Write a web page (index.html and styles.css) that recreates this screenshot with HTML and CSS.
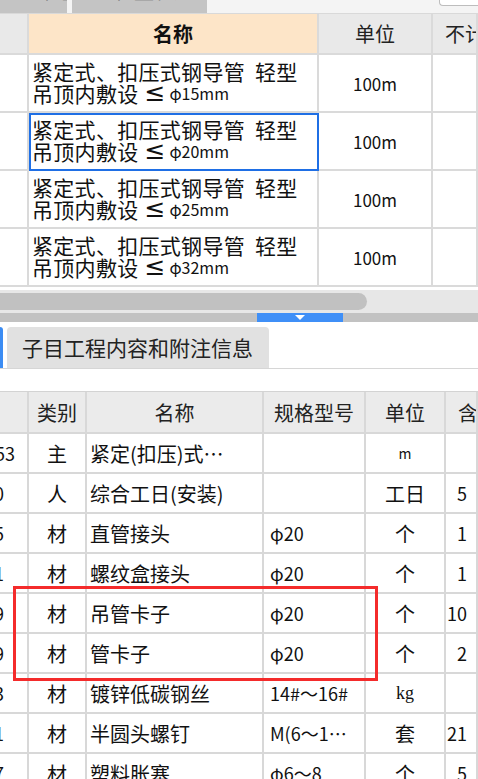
FILE: index.html
```html
<!DOCTYPE html>
<html lang="zh-CN">
<head>
<meta charset="utf-8">
<title>子目工程内容</title>
<link rel="stylesheet" href="styles.css">
</head>
<body>
<div class="page">
  <div class="strip">
    <div class="stab stab-1"><span>工程量</span></div>
    <div class="stab stab-2"><span>工程量表达式</span></div>
    <div class="strip-box"></div>
  </div>

  <div class="t1">
    <div class="c h"></div>
    <div class="c h hname">名称</div>
    <div class="c h">单位</div>
    <div class="c h hcut">不计价</div>

    <div class="c"></div>
    <div class="c ncell"><div class="ln">紧定式、扣压式钢导管&nbsp;&nbsp;轻型</div><div class="ln">吊顶内敷设 <span class="le">≤</span><span class="sz">φ15mm</span></div></div>
    <div class="c ucell">100m</div>
    <div class="c"></div>

    <div class="c"></div>
    <div class="c ncell sel"><div class="ln">紧定式、扣压式钢导管&nbsp;&nbsp;轻型</div><div class="ln">吊顶内敷设 <span class="le">≤</span><span class="sz">φ20mm</span></div></div>
    <div class="c ucell">100m</div>
    <div class="c"></div>

    <div class="c"></div>
    <div class="c ncell"><div class="ln">紧定式、扣压式钢导管&nbsp;&nbsp;轻型</div><div class="ln">吊顶内敷设 <span class="le">≤</span><span class="sz">φ25mm</span></div></div>
    <div class="c ucell">100m</div>
    <div class="c"></div>

    <div class="c"></div>
    <div class="c ncell"><div class="ln">紧定式、扣压式钢导管&nbsp;&nbsp;轻型</div><div class="ln">吊顶内敷设 <span class="le">≤</span><span class="sz">φ32mm</span></div></div>
    <div class="c ucell">100m</div>
    <div class="c"></div>
  </div>

  <div class="gap1"></div>
  <div class="hscroll"><div class="thumb"></div></div>
  <div class="splitter"><div class="grip"></div></div>

  <div class="tabs">
    <div class="tab-edge"></div>
    <div class="tab">子目工程内容和附注信息</div>
  </div>
  <div class="gap2"></div>

  <div class="t2wrap">
    <div class="t2">
      <div class="d hd"></div>
      <div class="d hd">类别</div>
      <div class="d hd">名称</div>
      <div class="d hd">规格型号</div>
      <div class="d hd">单位</div>
      <div class="d hd hqty">含量</div>

      <div class="d idx wide">0.053</div><div class="d mid">主</div><div class="d nm">紧定(扣压)式…</div><div class="d sp"></div><div class="d mid small">m</div><div class="d qty"></div>
      <div class="d idx">0.0</div><div class="d mid">人</div><div class="d nm">综合工日(安装)</div><div class="d sp"></div><div class="d mid">工日</div><div class="d qty">5</div>
      <div class="d idx">2.5</div><div class="d mid">材</div><div class="d nm">直管接头</div><div class="d sp">φ20</div><div class="d mid">个</div><div class="d qty">1</div>
      <div class="d idx">2.1</div><div class="d mid">材</div><div class="d nm">螺纹盒接头</div><div class="d sp">φ20</div><div class="d mid">个</div><div class="d qty">1</div>
      <div class="d idx">1.9</div><div class="d mid">材</div><div class="d nm">吊管卡子</div><div class="d sp">φ20</div><div class="d mid">个</div><div class="d qty">10</div>
      <div class="d idx">1.9</div><div class="d mid">材</div><div class="d nm">管卡子</div><div class="d sp">φ20</div><div class="d mid">个</div><div class="d qty">2</div>
      <div class="d idx">0.3</div><div class="d mid">材</div><div class="d nm">镀锌低碳钢丝</div><div class="d sp">14#～16#</div><div class="d mid kg">kg</div><div class="d qty"></div>
      <div class="d idx">4.1</div><div class="d mid">材</div><div class="d nm">半圆头螺钉</div><div class="d sp">M(6～1…</div><div class="d mid">套</div><div class="d qty">21</div>
      <div class="d idx">2.7</div><div class="d mid">材</div><div class="d nm">塑料胀塞</div><div class="d sp">φ6～8</div><div class="d mid">个</div><div class="d qty">5</div>
    </div>
    <div class="redbox"></div>
  </div>
</div>
</body>
</html>
```
FILE: styles.css
```css
html, body {
  margin: 0;
  padding: 0;
}
body {
  width: 478px;
  height: 779px;
  overflow: hidden;
  background: #ffffff;
  font-family: "Noto Sans CJK SC", "Noto Sans", sans-serif;
  color: #111111;
}
.page {
  width: 478px;
}

/* top strip */
.strip {
  display: flex;
  height: 14px;
  box-sizing: border-box;
  background: #f4f4f4;
  border-bottom: 1px solid #d9d9d9;
  overflow: hidden;
}
.stab {
  height: 13px;
  background: #c4c4c4;
  overflow: hidden;
  font-size: 20px;
  color: #555;
}
.stab-1 { width: 67px; }
.stab-2 { width: 135px; margin-left: 5px; }
.stab span {
  display: block;
  line-height: 20px;
  margin-top: -19px;
  padding-left: 22px;
  white-space: nowrap;
}
.strip-box {
  margin-left: auto;
  width: 38px;
  height: 5px;
  background: #fff;
  border: 1px solid #bdbdbd;
  border-top: none;
  border-right: none;
  border-radius: 0 0 0 4px;
}

/* top table */
.t1 {
  display: grid;
  grid-template-columns: 29px 290px 114px 1fr;
  grid-template-rows: 41px repeat(4, 58px);
}
.c {
  box-sizing: border-box;
  border-right: 2px solid #dadada;
  border-bottom: 2px solid #dadada;
  overflow: hidden;
  white-space: nowrap;
}
.h {
  background: #e9e9e9;
  display: flex;
  align-items: center;
  justify-content: center;
  font-size: 20px;
  color: #222;
}
.hname {
  background: #fde5c8;
  font-weight: bold;
  color: #111;
}
.hcut {
  justify-content: flex-start;
  padding-left: 12px;
}
.ncell {
  padding: 5px 0 0 3px;
  font-size: 21px;
  letter-spacing: 0.3px;
}
.ln {
  height: 22px;
  line-height: 20px;
  display: flex;
  align-items: center;
}
.le {
  font-size: 25px;
  line-height: 20px;
  font-family: "DejaVu Sans", sans-serif;
  letter-spacing: 0;
  margin-left: 6px;
}
.sz {
  font-size: 16px;
  letter-spacing: 0;
  margin-left: 4px;
}
.ucell {
  display: flex;
  align-items: center;
  justify-content: center;
  font-size: 17px;
}
.sel {
  outline: 2px solid #1f6fe5;
  outline-offset: -2px;
}

.gap1 { height: 3px; }
.hscroll {
  height: 23px;
  box-sizing: border-box;
  padding-top: 3px;
  background: #e7e7e7;
  overflow: hidden;
}
.thumb {
  margin-left: -12px;
  width: 379px;
  height: 17px;
  border-radius: 9px;
  background: #c1c1c1;
}
.splitter {
  height: 9px;
  background: #c2c2c2;
  display: flex;
}
.grip {
  margin-left: 257px;
  width: 86px;
  height: 9px;
  background: #3f8ff7;
  display: flex;
  align-items: center;
  justify-content: center;
}
.grip::after {
  content: "";
  width: 0;
  height: 0;
  border-left: 5px solid transparent;
  border-right: 5px solid transparent;
  border-top: 5px solid #ffffff;
}

.tabs {
  height: 47px;
  box-sizing: border-box;
  padding-top: 5px;
  border-bottom: 1px solid #d6d6d6;
  display: flex;
  align-items: stretch;
}
.tab-edge {
  width: 3px;
  background: #3b8cf3;
  border-radius: 0 3px 0 0;
}
.tab {
  margin-left: 4px;
  width: 262px;
  box-sizing: border-box;
  padding-left: 15px;
  background: #e1e1e1;
  border-radius: 4px 4px 0 0;
  font-size: 21px;
  line-height: 41px;
  color: #222;
  white-space: nowrap;
}
.gap2 { height: 22px; }

/* bottom table */
.t2wrap {
  position: relative;
}
.t2 {
  display: grid;
  grid-template-columns: 29px 58px 177px 102px 80px 1fr;
  grid-template-rows: 42px repeat(9, 40px);
  border-top: 1px solid #d3d3d3;
}
.d {
  box-sizing: border-box;
  border-right: 2px solid #d8d8d8;
  border-bottom: 2px solid #d8d8d8;
  overflow: hidden;
  white-space: nowrap;
  display: flex;
  align-items: center;
  font-size: 20px;
}
.hd {
  background: #ebebeb;
  justify-content: center;
  color: #222;
}
.hqty {
  justify-content: flex-start;
  padding-left: 12px;
}
.idx {
  justify-content: flex-end;
  padding-right: 23px;
  font-size: 18px;
}
.idx.wide {
  padding-right: 12px;
}
.mid {
  justify-content: center;
}
.small {
  font-size: 14px;
}
.kg {
  font-size: 18px;
  font-family: "Liberation Serif", serif;
}
.nm {
  padding-left: 3px;
}
.sp {
  padding-left: 6px;
  font-size: 18px;
}
.qty {
  justify-content: flex-end;
  padding-right: 9px;
  font-size: 18px;
}
.redbox {
  position: absolute;
  left: 13px;
  top: 195px;
  width: 365px;
  height: 95px;
  box-sizing: border-box;
  border: 3px solid #f42b2b;
}
```
